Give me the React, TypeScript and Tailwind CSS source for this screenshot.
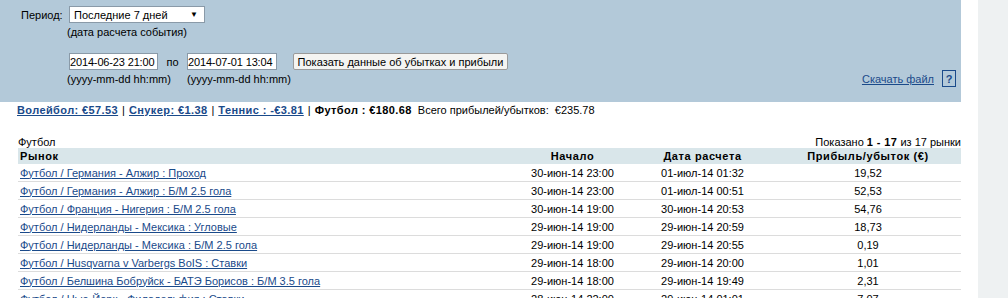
const rows = [
  ["Футбол / Германия - Алжир : Проход", "30-июн-14 23:00", "01-июл-14 01:32", "19,52"],
  ["Футбол / Германия - Алжир : Б/М 2.5 гола", "30-июн-14 23:00", "01-июл-14 00:51", "52,53"],
  ["Футбол / Франция - Нигерия : Б/М 2.5 гола", "30-июн-14 19:00", "30-июн-14 20:53", "54,76"],
  ["Футбол / Нидерланды - Мексика : Угловые", "29-июн-14 19:00", "29-июн-14 20:59", "18,73"],
  ["Футбол / Нидерланды - Мексика : Б/М 2.5 гола", "29-июн-14 19:00", "29-июн-14 20:55", "0,19"],
  ["Футбол / Husqvarna v Varbergs BoIS : Ставки", "29-июн-14 18:00", "29-июн-14 20:00", "1,01"],
  ["Футбол / Белшина Бобруйск - БАТЭ Борисов : Б/М 3.5 гола", "29-июн-14 18:00", "29-июн-14 19:49", "2,31"],
  ["Футбол / Нью-Йорк - Филадельфия : Ставки", "28-июн-14 22:00", "29-июн-14 01:01", "7,07"],
];

export default function App() {
  return (
    <div className="flex w-[1008px] h-[298px] overflow-hidden bg-white text-[11px] leading-[12px] text-black font-['Liberation_Sans',sans-serif]">
      <div className="w-[961px] shrink-0">
        {/* filter panel */}
        <div className="h-[102px] bg-[#b3c9d9] pl-[21px] pt-[6px] flex flex-col">
          <div className="flex items-center h-[17px]">
            <span className="w-[48px]">Период:</span>
            <div className="w-[136px] h-[17px] bg-white border border-[#8a9aa8] flex items-center justify-between pl-[4px] pr-[6px]">
              <span>Последние 7 дней</span>
              <span className="text-[8px]">▼</span>
            </div>
          </div>
          <div className="pl-[46px] mt-[3px]">(дата расчета события)</div>
          <div className="flex items-center h-[17px] mt-[15px] pl-[48px] whitespace-nowrap">
            <div className="w-[89px] h-[17px] bg-white border border-[#8a9aa8] flex items-center overflow-hidden tracking-[-0.15px]">2014-06-23 21:00</div>
            <span className="w-[29px] text-center">по</span>
            <div className="w-[90px] h-[17px] bg-white border border-[#8a9aa8] flex items-center overflow-hidden tracking-[-0.15px]">2014-07-01 13:04</div>
            <button className="ml-[16px] w-[215px] h-[17px] bg-[#f4f4f2] border border-[#9a9a9a] rounded-[2px] text-[11px] leading-[12px]">
              Показать данные об убытках и прибыли
            </button>
          </div>
          <div className="flex items-center justify-between h-[17px] pr-[5px]">
            <div className="flex pl-[46px]">
              <span className="w-[120px]">(yyyy-mm-dd hh:mm)</span>
              <span>(yyyy-mm-dd hh:mm)</span>
            </div>
            <div className="flex items-center gap-[8px]">
              <a className="text-[#1a4a8a] underline">Скачать файл </a>
              <span className="w-[14px] h-[17px] border border-[#1a4a8a] text-[#1a4a8a] font-bold flex items-center justify-center">?</span>
            </div>
          </div>
        </div>

        {/* sport totals */}
        <div className="h-[16px] flex items-center pl-[17px] whitespace-nowrap">
          <a className="font-bold tracking-[0.4px] text-[#1a4a8a] underline">Волейбол: €57.53</a>
          <span className="px-[4px]">|</span>
          <a className="font-bold tracking-[0.4px] text-[#1a4a8a] underline">Снукер: €1.38</a>
          <span className="px-[4px]">|</span>
          <a className="font-bold tracking-[0.4px] text-[#1a4a8a] underline">Теннис : -€3.81</a>
          <span className="px-[4px]">|</span>
          <span className="font-bold tracking-[0.4px]">Футбол : €180.68</span>
          <span className="ml-[6px]">Всего прибылей/убытков:&nbsp; €235.78</span>
        </div>

        {/* table */}
        <div className="ml-[18px] mt-[17px]">
          <div className="flex justify-between h-[13px] items-center">
            <span>Футбол</span>
            <span>
              Показано <b className="tracking-[0.4px]">1 - 17</b> из 17 рынки
            </span>
          </div>
          <div className="flex h-[16px] items-center bg-[#d9e6ea] font-bold tracking-[0.6px]">
            <div className="w-[497px] pl-[2px]">Рынок</div>
            <div className="w-[115px] text-center">Начало</div>
            <div className="w-[145px] text-center">Дата расчета</div>
            <div className="flex-1 text-center">Прибыль/убыток (€)</div>
          </div>
          {rows.map((r) => (
            <div key={r[0]} className="flex h-[18px] items-center border-b border-[#dcdcdc]">
              <div className="w-[497px] pl-[2px]">
                <a className="text-[#1a4a8a] underline">{r[0]}</a>
              </div>
              <div className="w-[115px] text-center">{r[1]}</div>
              <div className="w-[145px] text-center">{r[2]}</div>
              <div className="flex-1 text-center">{r[3]}</div>
            </div>
          ))}
        </div>
      </div>
      <div className="w-[17px] shrink-0" />
      <div className="flex-1 bg-[#eef1f2]" />
    </div>
  );
}
